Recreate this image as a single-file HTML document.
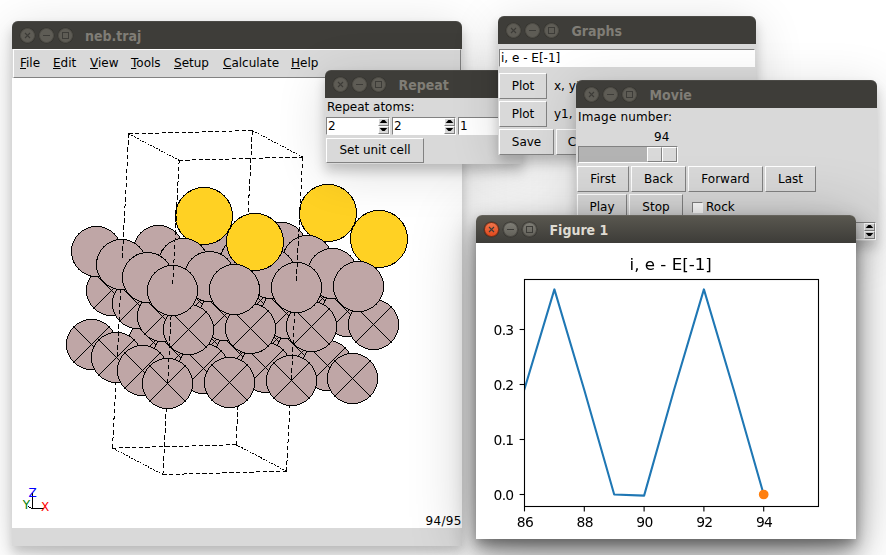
<!DOCTYPE html>
<html><head><meta charset="utf-8"><title>neb.traj</title>
<style>
html,body{margin:0;padding:0;}
body{width:886px;height:555px;background:#fff;overflow:hidden;position:relative;font-family:"DejaVu Sans","Liberation Sans",sans-serif;font-size:12px;color:#000;}
.win{position:absolute;background:#d9d9d9;border-radius:6px 6px 0 0;box-shadow:0 7px 12px 0 rgba(0,0,0,.2),0 8px 50px 0 rgba(0,0,0,.14);}
.win.act{box-shadow:0 5px 10px 0 rgba(0,0,0,.2),0 13px 24px 0 rgba(0,0,0,.44),0 8px 64px 0 rgba(0,0,0,.29);}
.tb{position:absolute;left:0;top:0;right:0;height:28px;background:#3e3d39;border-radius:6px 6px 0 0;box-shadow:inset 0 1px 0 rgba(255,255,255,.07);}
.tb.act{background:linear-gradient(#5a5850,#3d3c38);}
.tb .t{position:absolute;left:73.5px;top:5.5px;font-family:"DejaVu Sans Condensed","DejaVu Sans","Liberation Sans",sans-serif;font-weight:bold;font-size:14px;line-height:18px;color:#807d76;white-space:nowrap;}
.tb.act .t{color:#dfdbd2;}
.wb{position:absolute;top:7px;width:15px;height:15px;border-radius:50%;background:#5e5c55;box-sizing:border-box;border:1px solid #4f4d47;box-shadow:0 0 0 0.5px #35342f;}
.wb svg{position:absolute;left:-1px;top:-1px;}
.wb.c{left:8px}.wb.m{left:27px}.wb.x{left:46px}
.act .wb{background:linear-gradient(#7e7d75,#63615a);border-color:#4a4843;}
.act .wb.c{background:linear-gradient(#f0754b,#e0491d);border-color:#7a2c13;}
.btn{position:absolute;box-sizing:border-box;padding-top:1px;background:#d9d9d9;border:1px solid;border-color:#fff #828282 #828282 #fff;text-align:center;white-space:nowrap;}
.lbl{position:absolute;white-space:nowrap;line-height:14px;}
.ent{position:absolute;box-sizing:border-box;background:#fff;border:1px solid;border-color:#828282 #fff #fff #828282;}
.spb{position:absolute;box-sizing:border-box;background:#d9d9d9;border:1px solid;border-color:#fff #828282 #828282 #fff;width:11px;}
.spb i{position:absolute;left:0;top:1px;width:9px;height:3px;background:#000;}
.spb.u i{clip-path:polygon(0.7px 3px,8.3px 3px,5.6px 0,3.4px 0);}
.spb.d i{clip-path:polygon(0.7px 0,8.3px 0,5.6px 3px,3.4px 3px);}
u{text-decoration:underline;text-underline-offset:1px;}
</style></head><body>

<!-- main window -->
<div class="win" style="left:12px;top:21px;width:450px;height:525px;">
 <div class="tb"><div class="wb c"><svg width="15" height="15"><path d="M5 5l5 5M10 5l-5 5" stroke="#3d3c38" stroke-width="1.1" fill="none"/></svg></div><div class="wb m"><svg width="15" height="15"><path d="M4 7.5h7" stroke="#3d3c38" stroke-width="1"/></svg></div><div class="wb x"><svg width="15" height="15"><rect x="4.5" y="4.5" width="6" height="6" stroke="#3d3c38" stroke-width="1" fill="none"/></svg></div><div class="t" style="left:73px">neb.traj</div></div>
 <div style="position:absolute;left:1px;top:28px;width:448px;height:29px;box-sizing:border-box;background:#d9d9d9;border:1px solid;border-color:#fff #828282 #828282 #fff;"></div>
 <div class="lbl" style="left:8px;top:35px;"><u>F</u>ile</div>
 <div class="lbl" style="left:41px;top:35px;"><u>E</u>dit</div>
 <div class="lbl" style="left:78px;top:35px;"><u>V</u>iew</div>
 <div class="lbl" style="left:119px;top:35px;"><u>T</u>ools</div>
 <div class="lbl" style="left:162px;top:35px;"><u>S</u>etup</div>
 <div class="lbl" style="left:211px;top:35px;"><u>C</u>alculate</div>
 <div class="lbl" style="left:279px;top:35px;"><u>H</u>elp</div>
 <div style="position:absolute;left:0;top:57px;width:450px;height:450px;background:#fff;overflow:hidden;">
  <svg width="450" height="450" shape-rendering="crispEdges" stroke="#000" stroke-width="1" style="position:absolute;left:0;top:0;">
<circle cx="285.5" cy="207.5" r="25.0" fill="#BFA6A6"/>
<path d="M267.5 189.5L303.5 225.5M303.5 189.5L267.5 225.5"/>
<circle cx="223.5" cy="209.5" r="25.0" fill="#BFA6A6"/>
<path d="M205.5 191.5L241.5 227.5M241.5 191.5L205.5 227.5"/>
<circle cx="264.5" cy="261.5" r="25.0" fill="#BFA6A6"/>
<path d="M246.5 243.5L282.5 279.5M282.5 243.5L246.5 279.5"/>
<circle cx="161.5" cy="210.5" r="25.0" fill="#BFA6A6"/>
<path d="M143.5 192.5L179.5 228.5M179.5 192.5L143.5 228.5"/>
<circle cx="269.5" cy="169.5" r="25.0" fill="#BFA6A6"/>
<circle cx="202.5" cy="263.5" r="25.0" fill="#BFA6A6"/>
<path d="M184.5 245.5L220.5 281.5M220.5 245.5L184.5 281.5"/>
<circle cx="310.5" cy="220.5" r="25.0" fill="#BFA6A6"/>
<path d="M292.5 202.5L328.5 238.5M328.5 202.5L292.5 238.5"/>
<circle cx="316.0" cy="135.0" r="28.5" fill="#FFD123"/>
<circle cx="99.5" cy="212.5" r="25.0" fill="#BFA6A6"/>
<path d="M81.5 194.5L117.5 230.5M117.5 194.5L81.5 230.5"/>
<circle cx="207.5" cy="169.5" r="25.0" fill="#BFA6A6"/>
<circle cx="141.5" cy="264.5" r="25.0" fill="#BFA6A6"/>
<path d="M123.5 246.5L159.5 282.5M159.5 246.5L123.5 282.5"/>
<circle cx="248.5" cy="222.5" r="25.0" fill="#BFA6A6"/>
<path d="M230.5 204.5L266.5 240.5M266.5 204.5L230.5 240.5"/>
<circle cx="289.5" cy="274.5" r="25.0" fill="#BFA6A6"/>
<path d="M271.5 256.5L307.5 292.5M307.5 256.5L271.5 292.5"/>
<circle cx="146.5" cy="172.5" r="25.0" fill="#BFA6A6"/>
<path d="M224.3 362.7L224.1 367.2M220.3 366.8L224.6 366.7M224.7 355.6L224.4 360.1M224.0 366.7L225.6 367.5M225.0 348.5L224.8 353.1M213.6 367.0L217.9 366.9M225.4 341.5L225.2 346.0M225.8 334.4L225.5 339.0M206.9 367.2L211.2 367.1M226.1 327.4L225.9 331.9"/>
<circle cx="79.5" cy="266.5" r="25.0" fill="#BFA6A6"/>
<path d="M61.5 248.5L97.5 284.5M97.5 248.5L61.5 284.5"/>
<circle cx="187.5" cy="223.5" r="25.0" fill="#BFA6A6"/>
<path d="M169.5 205.5L205.5 241.5M205.5 205.5L169.5 241.5"/>
<path d="M226.5 320.3L226.3 324.8M226.7 368.1L228.3 368.9M200.2 367.4L204.6 367.2"/>
<circle cx="295.5" cy="182.5" r="25.0" fill="#BFA6A6"/>
<path d="M226.9 313.2L226.6 317.8M227.2 306.2L227.0 310.7M193.5 367.5L197.9 367.4M227.6 299.1L227.4 303.7M228.0 292.1L227.7 296.6M228.3 285.0L228.1 289.5M186.9 367.7L191.2 367.6M229.5 369.5L231.0 370.3M228.7 277.9L228.5 282.5"/>
<circle cx="228.5" cy="276.5" r="25.0" fill="#BFA6A6"/>
<path d="M210.5 258.5L246.5 294.5M246.5 258.5L210.5 294.5"/>
<circle cx="335.5" cy="233.5" r="25.0" fill="#BFA6A6"/>
<path d="M317.5 215.5L353.5 251.5M353.5 215.5L317.5 251.5"/>
<path d="M229.1 270.9L228.8 275.4M180.2 367.9L184.5 367.8M229.4 263.8L229.2 268.3M229.8 256.8L229.6 261.3M173.5 368.1L177.8 368.0M230.2 249.7L229.9 254.2M232.2 371.0L233.7 371.8M230.5 242.6L230.3 247.2M166.8 368.3L171.2 368.2M230.9 235.6L230.6 240.1"/>
<circle cx="192.0" cy="138.0" r="28.5" fill="#FFD123"/>
<path d="M231.2 228.5L231.0 233.0M160.1 368.5L164.5 368.3"/>
<circle cx="84.5" cy="173.5" r="25.0" fill="#BFA6A6"/>
<path d="M231.6 221.5L231.4 226.0M232.0 214.4L231.7 218.9M234.9 372.4L236.4 373.2M153.4 368.6L157.8 368.5M232.3 207.3L232.1 211.9M232.7 200.3L232.5 204.8M233.1 193.2L232.8 197.7M146.8 368.8L151.1 368.7M233.4 186.2L233.2 190.7"/>
<circle cx="125.5" cy="225.5" r="25.0" fill="#BFA6A6"/>
<path d="M107.5 207.5L143.5 243.5M143.5 207.5L107.5 243.5"/>
<path d="M233.8 179.1L233.6 183.6M140.1 369.0L144.4 368.9M237.6 373.8L239.2 374.6"/>
<circle cx="233.5" cy="182.5" r="25.0" fill="#BFA6A6"/>
<path d="M234.2 172.0L233.9 176.6M234.5 165.0L234.3 169.5M133.4 369.2L137.7 369.1M234.9 157.9L234.7 162.4M235.3 150.9L235.0 155.4M126.7 369.4L131.1 369.3M235.6 143.8L235.4 148.3M240.4 375.2L241.9 376.1M236.0 136.7L235.8 141.3"/>
<circle cx="166.5" cy="277.5" r="25.0" fill="#BFA6A6"/>
<path d="M148.5 259.5L184.5 295.5M184.5 259.5L148.5 295.5"/>
<circle cx="274.5" cy="235.5" r="25.0" fill="#BFA6A6"/>
<path d="M256.5 217.5L292.5 253.5M292.5 217.5L256.5 253.5"/>
<path d="M120.0 369.6L124.4 369.4M236.4 129.7L236.1 134.2M236.7 122.6L236.5 127.1M113.4 369.7L117.7 369.6M237.1 115.5L236.9 120.1M237.5 108.5L237.2 113.0M243.1 376.7L244.6 377.5M106.7 369.9L111.0 369.8M237.8 101.4L237.6 106.0M238.2 94.4L238.0 98.9M238.5 87.3L238.3 91.8M100.0 370.1L104.3 370.0"/>
<circle cx="315.5" cy="287.5" r="25.0" fill="#BFA6A6"/>
<path d="M297.5 269.5L333.5 305.5M333.5 269.5L297.5 305.5"/>
<path d="M100.7 366.1L100.5 370.6M238.9 80.2L238.7 84.8M101.1 359.0L100.8 363.5M100.4 370.1L102.0 370.9M239.3 73.2L239.0 77.7M245.8 378.1L247.3 378.9M101.4 351.9L101.2 356.5M239.6 66.1L239.4 70.7M101.8 344.9L101.6 349.4M240.0 59.1L239.8 63.6M102.2 337.8L101.9 342.4M240.4 52.0L240.1 56.5M236.5 52.6L240.8 52.5M102.5 330.8L102.3 335.3M240.3 52.5L241.8 53.3M102.9 323.7L102.7 328.2M103.1 371.5L104.7 372.3M248.5 379.5L250.1 380.4"/>
<circle cx="171.5" cy="185.5" r="25.0" fill="#BFA6A6"/>
<path d="M103.3 316.6L103.0 321.2M229.8 52.8L234.2 52.7M103.6 309.6L103.4 314.1M104.0 302.5L103.8 307.1M223.1 53.0L227.5 52.9M104.4 295.5L104.1 300.0M243.0 53.9L244.5 54.7M104.7 288.4L104.5 292.9M105.9 372.9L107.4 373.7M216.5 53.2L220.8 53.0M251.3 381.0L252.8 381.8M105.1 281.3L104.9 285.9"/>
<circle cx="104.5" cy="279.5" r="25.0" fill="#BFA6A6"/>
<path d="M86.5 261.5L122.5 297.5M122.5 261.5L86.5 297.5"/>
<circle cx="212.5" cy="237.5" r="25.0" fill="#BFA6A6"/>
<path d="M194.5 219.5L230.5 255.5M230.5 219.5L194.5 255.5"/>
<path d="M105.5 274.3L105.2 278.8M209.8 53.3L214.1 53.2"/>
<circle cx="320.5" cy="195.5" r="25.0" fill="#BFA6A6"/>
<path d="M105.8 267.2L105.6 271.7M106.2 260.2L106.0 264.7M203.1 53.5L207.4 53.4M245.7 55.3L247.2 56.1M106.6 253.1L106.3 257.6M108.6 374.4L110.1 375.2M254.0 382.4L255.5 383.2M106.9 246.0L106.7 250.6M196.4 53.7L200.8 53.6M107.3 239.0L107.0 243.5M107.6 231.9L107.4 236.4"/>
<circle cx="253.5" cy="289.5" r="25.0" fill="#BFA6A6"/>
<path d="M235.5 271.5L271.5 307.5M271.5 271.5L235.5 307.5"/>
<circle cx="361.5" cy="246.5" r="25.0" fill="#BFA6A6"/>
<path d="M343.5 228.5L379.5 264.5M379.5 228.5L343.5 264.5"/>
<path d="M189.7 53.9L194.1 53.8M108.0 224.9L107.8 229.4M248.4 56.8L250.0 57.6M108.4 217.8L108.1 222.3M111.3 375.8L112.8 376.6M256.7 383.8L258.2 384.7M108.7 210.7L108.5 215.3M183.1 54.1L187.4 54.0M109.1 203.7L108.9 208.2M109.5 196.6L109.2 201.1M176.4 54.3L180.7 54.1M109.8 189.6L109.6 194.1M251.2 58.2L252.7 59.0M110.2 182.5L110.0 187.0M114.0 377.2L115.6 378.0M169.7 54.4L174.0 54.3"/>
<circle cx="109.5" cy="186.5" r="25.0" fill="#BFA6A6"/>
<path d="M110.6 175.4L110.3 180.0M259.4 385.3L261.0 386.1M110.9 168.4L110.7 172.9M163.0 54.6L167.4 54.5M111.3 161.3L111.1 165.8M111.7 154.3L111.4 158.8M156.3 54.8L160.7 54.7M253.9 59.6L255.4 60.4M112.0 147.2L111.8 151.7M116.8 378.6L118.3 379.5M112.4 140.1L112.2 144.7"/>
<circle cx="367.0" cy="161.0" r="28.5" fill="#FFD123"/>
<path d="M262.2 386.7L263.7 387.5"/>
<circle cx="150.5" cy="238.5" r="25.0" fill="#BFA6A6"/>
<path d="M132.5 220.5L168.5 256.5M168.5 220.5L132.5 256.5"/>
<path d="M149.7 55.0L154.0 54.9M112.8 133.1L112.5 137.6"/>
<circle cx="258.5" cy="195.5" r="25.0" fill="#BFA6A6"/>
<path d="M113.1 126.0L112.9 130.5M113.5 118.9L113.3 123.5M143.0 55.2L147.3 55.1M113.9 111.9L113.6 116.4M256.6 61.0L258.1 61.9M119.5 380.1L121.0 380.9M114.2 104.8L114.0 109.4M264.9 388.1L266.4 388.9M136.3 55.4L140.6 55.2M114.6 97.8L114.4 102.3M114.9 90.7L114.7 95.2M129.6 55.5L134.0 55.4"/>
<circle cx="191.5" cy="290.5" r="25.0" fill="#BFA6A6"/>
<path d="M173.5 272.5L209.5 308.5M209.5 272.5L173.5 308.5"/>
<circle cx="299.5" cy="248.5" r="25.0" fill="#BFA6A6"/>
<path d="M281.5 230.5L317.5 266.5M317.5 230.5L281.5 266.5"/>
<path d="M115.3 83.6L115.1 88.2M115.7 76.6L115.4 81.1M259.3 62.5L260.9 63.3M122.9 55.7L127.3 55.6M122.2 381.5L123.7 382.3M116.0 69.5L115.8 74.1M267.6 389.6L269.1 390.4M116.4 62.5L116.2 67.0M116.3 55.9L120.6 55.8M116.8 55.4L116.5 59.9M116.7 55.9L118.2 56.7M262.1 63.9L263.6 64.7"/>
<circle cx="340.5" cy="300.5" r="25.0" fill="#BFA6A6"/>
<path d="M322.5 282.5L358.5 318.5M358.5 282.5L322.5 318.5"/>
<path d="M124.9 382.9L126.5 383.8M270.3 391.0L271.9 391.8M119.4 57.3L120.9 58.1M264.8 65.3L266.3 66.2M127.7 384.4L129.2 385.2M273.0 392.4L274.6 393.2"/>
<circle cx="197.5" cy="198.5" r="25.0" fill="#BFA6A6"/>
<path d="M274.7 389.2L274.5 393.7M270.7 393.3L275.0 393.2M275.1 382.1L274.8 386.6M122.1 58.7L123.6 59.5M275.4 375.0L275.2 379.6M267.5 66.8L269.0 67.6M264.0 393.5L268.3 393.4M130.4 385.8L131.9 386.6M275.8 368.0L275.6 372.5M276.2 360.9L275.9 365.5M257.3 393.7L261.6 393.6M276.5 353.9L276.3 358.4"/>
<circle cx="130.5" cy="292.5" r="25.0" fill="#BFA6A6"/>
<path d="M112.5 274.5L148.5 310.5M148.5 274.5L112.5 310.5"/>
<circle cx="238.5" cy="250.5" r="25.0" fill="#BFA6A6"/>
<path d="M220.5 232.5L256.5 268.5M256.5 232.5L220.5 268.5"/>
<path d="M276.9 346.8L276.7 351.3M250.6 393.9L255.0 393.7M124.8 60.2L126.4 61.0"/>
<circle cx="346.5" cy="208.5" r="25.0" fill="#BFA6A6"/>
<path d="M277.3 339.7L277.0 344.3M270.2 68.2L271.8 69.0M133.1 387.2L134.6 388.1M277.6 332.7L277.4 337.2M243.9 394.0L248.3 393.9M278.0 325.6L277.8 330.2M278.4 318.6L278.1 323.1M278.7 311.5L278.5 316.0M237.3 394.2L241.6 394.1M127.6 61.6L129.1 62.4M279.1 304.4L278.9 309.0M273.0 69.6L274.5 70.5"/>
<circle cx="279.5" cy="302.5" r="25.0" fill="#BFA6A6"/>
<path d="M261.5 284.5L297.5 320.5M297.5 284.5L261.5 320.5"/>
<path d="M279.5 297.4L279.2 301.9M135.8 388.7L137.4 389.5M230.6 394.4L234.9 394.3M279.8 290.3L279.6 294.8M280.2 283.3L280.0 287.8M223.9 394.6L228.2 394.5M280.6 276.2L280.3 280.7M130.3 63.0L131.8 63.8M280.9 269.1L280.7 273.7M217.2 394.8L221.6 394.7M275.7 71.1L277.2 71.9M281.3 262.1L281.0 266.6"/>
<circle cx="243.0" cy="164.0" r="28.5" fill="#FFD123"/>
<path d="M138.6 390.1L140.1 390.9M281.6 255.0L281.4 259.5M210.5 395.0L214.9 394.8"/>
<circle cx="135.5" cy="199.5" r="25.0" fill="#BFA6A6"/>
<path d="M282.0 248.0L281.8 252.5M282.4 240.9L282.1 245.4M203.8 395.1L208.2 395.0M282.7 233.8L282.5 238.4M133.0 64.4L134.5 65.3M278.4 72.5L279.9 73.3M283.1 226.8L282.9 231.3M141.3 391.5L142.8 392.3M283.5 219.7L283.2 224.2M197.2 395.3L201.5 395.2M283.8 212.7L283.6 217.2"/>
<circle cx="176.5" cy="251.5" r="25.0" fill="#BFA6A6"/>
<path d="M158.5 233.5L194.5 269.5M194.5 233.5L158.5 269.5"/>
<path d="M284.2 205.6L284.0 210.1M190.5 395.5L194.8 395.4"/>
<circle cx="284.5" cy="209.5" r="25.0" fill="#BFA6A6"/>
<path d="M284.6 198.5L284.3 203.1M135.7 65.9L137.3 66.7M281.1 73.9L282.7 74.7M284.9 191.5L284.7 196.0M144.0 393.0L145.5 393.8M183.8 395.7L188.1 395.6M285.3 184.4L285.1 188.9M285.7 177.4L285.4 181.9M177.1 395.9L181.5 395.8M286.0 170.3L285.8 174.8M286.4 163.2L286.2 167.8M138.5 67.3L140.0 68.1"/>
<circle cx="217.5" cy="304.5" r="25.0" fill="#BFA6A6"/>
<path d="M199.5 286.5L235.5 322.5M235.5 286.5L199.5 322.5"/>
<path d="M170.4 396.1L174.8 395.9M283.9 75.4L285.4 76.2M286.8 156.2L286.5 160.7M146.7 394.4L148.3 395.2M287.1 149.1L286.9 153.6M163.8 396.2L168.1 396.1M287.5 142.0L287.3 146.6M287.9 135.0L287.6 139.5M157.1 396.4L161.4 396.3M288.2 127.9L288.0 132.5M141.2 68.7L142.7 69.6M286.6 76.8L288.1 77.6M288.6 120.9L288.4 125.4M149.4 395.8L151.0 396.6M288.9 113.8L288.7 118.3M150.4 396.6L154.7 396.5M151.1 392.6L150.9 397.1M289.3 106.7L289.1 111.3M151.5 385.5L151.2 390.0M289.7 99.7L289.4 104.2M151.8 378.4L151.6 383.0M290.0 92.6L289.8 97.2M143.9 70.2L145.4 71.0M152.2 371.4L152.0 375.9M289.3 78.2L290.8 79.0M290.4 85.6L290.2 90.1M152.6 364.3L152.3 368.9M290.8 78.5L290.5 83.0M286.9 79.1L291.2 79.0M152.9 357.3L152.7 361.8M153.3 350.2L153.1 354.7"/>
<circle cx="222.5" cy="211.5" r="25.0" fill="#BFA6A6"/>
<path d="M153.7 343.1L153.4 347.7M280.2 79.3L284.6 79.2M146.6 71.6L148.2 72.4M154.0 336.1L153.8 340.6M154.4 329.0L154.2 333.6M273.5 79.5L277.9 79.4M154.8 322.0L154.5 326.5M155.1 314.9L154.9 319.4M266.9 79.7L271.2 79.5M155.5 307.8L155.3 312.4M149.4 73.0L150.9 73.9"/>
<circle cx="155.5" cy="305.5" r="25.0" fill="#BFA6A6"/>
<path d="M137.5 287.5L173.5 323.5M173.5 287.5L137.5 323.5"/>
<path d="M155.9 300.8L155.6 305.3M260.2 79.8L264.5 79.7M156.2 293.7L156.0 298.2M156.6 286.7L156.4 291.2M253.5 80.0L257.8 79.9M157.0 279.6L156.7 284.1M157.3 272.5L157.1 277.1M152.1 74.5L153.6 75.3M246.8 80.2L251.2 80.1M157.7 265.5L157.4 270.0M158.0 258.4L157.8 262.9M240.1 80.4L244.5 80.3M158.4 251.4L158.2 255.9M158.8 244.3L158.5 248.8M159.1 237.2L158.9 241.8M233.5 80.6L237.8 80.5M154.8 75.9L156.3 76.7M159.5 230.2L159.3 234.7M159.9 223.1L159.6 227.6M226.8 80.8L231.1 80.6M160.2 216.1L160.0 220.6M160.6 209.0L160.4 213.5M220.1 80.9L224.4 80.8"/>
<circle cx="160.5" cy="212.5" r="25.0" fill="#BFA6A6"/>
<path d="M161.0 201.9L160.7 206.5M157.5 77.3L159.1 78.1M161.3 194.9L161.1 199.4M213.4 81.1L217.8 81.0M161.7 187.8L161.5 192.3M162.1 180.8L161.8 185.3M206.7 81.3L211.1 81.2M162.4 173.7L162.2 178.2M162.8 166.6L162.6 171.2M160.3 78.8L161.8 79.6M200.1 81.5L204.4 81.4M163.2 159.6L162.9 164.1M163.5 152.5L163.3 157.0M163.9 145.4L163.7 150.0M193.4 81.7L197.7 81.6M164.3 138.4L164.0 142.9M164.6 131.3L164.4 135.9M186.7 81.9L191.0 81.7M163.0 80.2L164.5 81.0M165.0 124.3L164.8 128.8M165.3 117.2L165.1 121.7M180.0 82.0L184.4 81.9M165.7 110.1L165.5 114.7M166.1 103.1L165.8 107.6M173.3 82.2L177.7 82.1M166.4 96.0L166.2 100.6M165.7 81.6L167.2 82.4M166.8 89.0L166.6 93.5M166.7 82.4L171.0 82.3M167.2 81.9L166.9 86.4"/>
   <path d="M20.5 430.5V415M20.5 430.5H32M20.5 430.5L16 428.5" fill="none"/>
  </svg>
  <svg width="450" height="450" style="position:absolute;left:0;top:0;font-size:12px;" text-anchor="middle">
   <text x="20.5" y="419" fill="#0000ff">Z</text>
   <text x="33" y="433" fill="#ff0000">X</text>
   <text x="14.5" y="431" fill="#008000">Y</text>
   <text x="449.7" y="447" fill="#000" text-anchor="end" letter-spacing="0.3">94/95</text>
  </svg>
 </div>
</div>

<!-- Repeat window -->
<div class="win" style="left:325px;top:70px;width:198px;height:94px;">
 <div class="tb"><div class="wb c"><svg width="15" height="15"><path d="M5 5l5 5M10 5l-5 5" stroke="#3d3c38" stroke-width="1.1" fill="none"/></svg></div><div class="wb m"><svg width="15" height="15"><path d="M4 7.5h7" stroke="#3d3c38" stroke-width="1"/></svg></div><div class="wb x"><svg width="15" height="15"><rect x="4.5" y="4.5" width="6" height="6" stroke="#3d3c38" stroke-width="1" fill="none"/></svg></div><div class="t">Repeat</div></div>
 <div class="lbl" style="left:2px;top:30px;">Repeat atoms:</div>
 <div class="ent" style="left:1px;top:47px;width:64px;height:18px;"><div class="lbl" style="left:1px;top:1px;">2</div></div>
 <div class="spb u" style="left:53px;top:48px;height:8px;"><i></i></div><div class="spb d" style="left:53px;top:56px;height:8px;"><i></i></div>
 <div class="ent" style="left:67px;top:47px;width:64px;height:18px;"><div class="lbl" style="left:1px;top:1px;">2</div></div>
 <div class="spb u" style="left:119px;top:48px;height:8px;"><i></i></div><div class="spb d" style="left:119px;top:56px;height:8px;"><i></i></div>
 <div class="ent" style="left:133px;top:47px;width:64px;height:18px;"><div class="lbl" style="left:1px;top:1px;">1</div></div>
 <div class="btn" style="left:1px;top:68px;width:98px;height:25px;line-height:20px;">Set unit cell</div>
</div>

<!-- Graphs window -->
<div class="win" style="left:498px;top:16px;width:258px;height:139px;">
 <div class="tb"><div class="wb c"><svg width="15" height="15"><path d="M5 5l5 5M10 5l-5 5" stroke="#3d3c38" stroke-width="1.1" fill="none"/></svg></div><div class="wb m"><svg width="15" height="15"><path d="M4 7.5h7" stroke="#3d3c38" stroke-width="1"/></svg></div><div class="wb x"><svg width="15" height="15"><rect x="4.5" y="4.5" width="6" height="6" stroke="#3d3c38" stroke-width="1" fill="none"/></svg></div><div class="t">Graphs</div></div>
 <div class="ent" style="left:1px;top:33px;width:256px;height:18px;"><div class="lbl" style="left:1px;top:1px;">i, e - E[-1]</div></div>
 <div class="btn" style="left:1px;top:57px;width:48px;height:26px;line-height:23px;">Plot</div>
 <div class="lbl" style="left:56px;top:63px;">x, y1, y2, ...</div>
 <div class="btn" style="left:1px;top:85px;width:48px;height:26px;line-height:23px;">Plot</div>
 <div class="lbl" style="left:56px;top:91px;">y1, y2, ...</div>
 <div class="btn" style="left:1px;top:113px;width:55px;height:26px;line-height:23px;">Save</div>
 <div class="btn" style="left:58px;top:113px;width:55px;height:26px;line-height:23px;">Clear</div>
</div>

<!-- Movie window -->
<div class="win" style="left:576px;top:80px;width:301px;height:161px;">
 <div class="tb"><div class="wb c"><svg width="15" height="15"><path d="M5 5l5 5M10 5l-5 5" stroke="#3d3c38" stroke-width="1.1" fill="none"/></svg></div><div class="wb m"><svg width="15" height="15"><path d="M4 7.5h7" stroke="#3d3c38" stroke-width="1"/></svg></div><div class="wb x"><svg width="15" height="15"><rect x="4.5" y="4.5" width="6" height="6" stroke="#3d3c38" stroke-width="1" fill="none"/></svg></div><div class="t">Movie</div></div>
 <div class="lbl" style="left:2px;top:30px;letter-spacing:0.17px;">Image number:</div>
 <div class="lbl" style="left:78px;top:50px;">94</div>
 <div style="position:absolute;left:2px;top:66px;width:100px;height:17px;box-sizing:border-box;background:#b3b3b3;border:1px solid;border-color:#828282 #fff #fff #828282;"></div>
 <div class="btn" style="left:71px;top:67px;width:15px;height:15px;border-right-color:#828282;"></div>
 <div class="btn" style="left:86px;top:67px;width:15px;height:15px;"></div>
 <div class="btn" style="left:1px;top:86px;width:52px;height:26px;line-height:23px;">First</div>
 <div class="btn" style="left:55px;top:86px;width:55px;height:26px;line-height:23px;">Back</div>
 <div class="btn" style="left:112px;top:86px;width:75px;height:26px;line-height:23px;">Forward</div>
 <div class="btn" style="left:189px;top:86px;width:51px;height:26px;line-height:23px;">Last</div>
 <div class="btn" style="left:1px;top:114px;width:50px;height:26px;line-height:23px;">Play</div>
 <div class="btn" style="left:53px;top:114px;width:54px;height:26px;line-height:23px;">Stop</div>
 <div class="ent" style="left:116px;top:122px;width:11px;height:11px;"></div>
 <div class="lbl" style="left:130px;top:120px;">Rock</div>
 <div class="ent" style="left:236px;top:142px;width:64px;height:18px;background:#d9d9d9;"></div>
 <div class="spb u" style="left:288px;top:143px;height:8px;"><i></i></div><div class="spb d" style="left:288px;top:151px;height:8px;"><i></i></div>
</div>

<!-- Figure window -->
<div class="win act" style="left:476px;top:215px;width:380px;height:324px;background:#fff;">
 <div class="tb act"><div class="wb c"><svg width="15" height="15"><path d="M5 5l5 5M10 5l-5 5" stroke="#3d3c38" stroke-width="1.1" fill="none"/></svg></div><div class="wb m"><svg width="15" height="15"><path d="M4 7.5h7" stroke="#3d3c38" stroke-width="1"/></svg></div><div class="wb x"><svg width="15" height="15"><rect x="4.5" y="4.5" width="6" height="6" stroke="#3d3c38" stroke-width="1" fill="none"/></svg></div><div class="t">Figure 1</div></div>
 <svg width="380" height="296" style="position:absolute;left:0;top:28px;will-change:transform;font-size:13.89px;font-family:'DejaVu Sans','Liberation Sans',sans-serif;" fill="#000">
<clipPath id="axc"><rect x="48.5" y="36.5" width="294.0" height="227.0"/></clipPath>
<polyline clip-path="url(#axc)" points="48.5,145.9 78.4,46.4 108.3,147.0 138.2,251.5 168.1,252.6 198.0,147.0 227.9,46.4 257.8,147.0 287.7,251.5" fill="none" stroke="#1f77b4" stroke-width="2.08" stroke-linejoin="round" stroke-linecap="square"/>
<circle cx="287.7" cy="251.5" r="4.17" fill="#ff7f0e" stroke="#ff7f0e" stroke-width="1.39"/>
<path d="M48.5 263.5v4.9" stroke="#000" stroke-width="1.1"/>
<text x="48.9" y="283.7" text-anchor="middle" letter-spacing="-0.7">86</text>
<path d="M108.3 263.5v4.9" stroke="#000" stroke-width="1.1"/>
<text x="108.7" y="283.7" text-anchor="middle" letter-spacing="-0.7">88</text>
<path d="M168.1 263.5v4.9" stroke="#000" stroke-width="1.1"/>
<text x="168.5" y="283.7" text-anchor="middle" letter-spacing="-0.7">90</text>
<path d="M227.9 263.5v4.9" stroke="#000" stroke-width="1.1"/>
<text x="228.3" y="283.7" text-anchor="middle" letter-spacing="-0.7">92</text>
<path d="M287.7 263.5v4.9" stroke="#000" stroke-width="1.1"/>
<text x="288.1" y="283.7" text-anchor="middle" letter-spacing="-0.7">94</text>
<path d="M48.5 251.5h-4.9" stroke="#000" stroke-width="1.1"/>
<text x="37.5" y="256.7" text-anchor="end" letter-spacing="-0.7">0.0</text>
<path d="M48.5 196.5h-4.9" stroke="#000" stroke-width="1.1"/>
<text x="37.5" y="201.7" text-anchor="end" letter-spacing="-0.7">0.1</text>
<path d="M48.5 141.5h-4.9" stroke="#000" stroke-width="1.1"/>
<text x="37.5" y="146.7" text-anchor="end" letter-spacing="-0.7">0.2</text>
<path d="M48.5 86.5h-4.9" stroke="#000" stroke-width="1.1"/>
<text x="37.5" y="91.7" text-anchor="end" letter-spacing="-0.7">0.3</text>
<rect x="48.5" y="36.5" width="294.0" height="227.0" fill="none" stroke="#000" stroke-width="1.1"/>
<text x="194.7" y="26.6" text-anchor="middle" font-size="16.67">i, e - E[-1]</text>
 </svg>
</div>
</body></html>
